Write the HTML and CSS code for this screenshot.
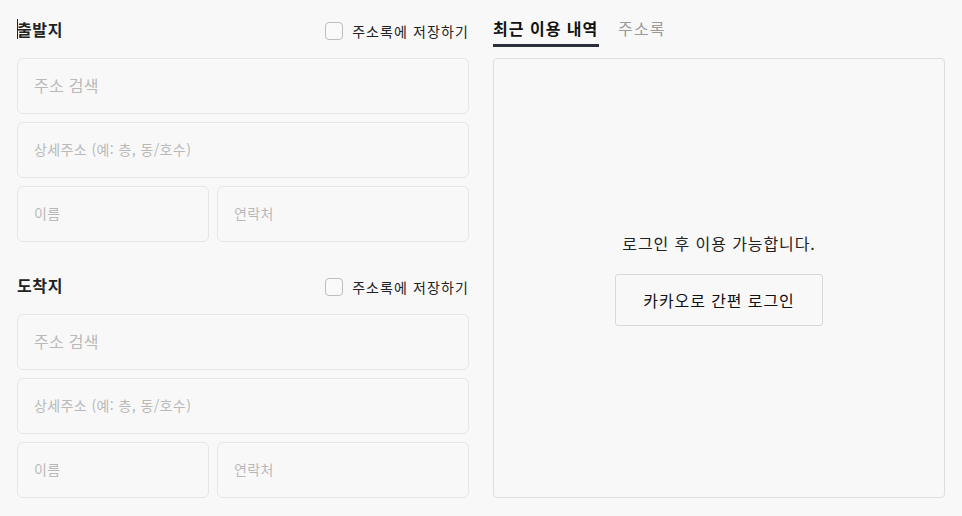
FILE: index.html
```html
<!DOCTYPE html>
<html lang="ko">
<head>
<meta charset="utf-8">
<link rel="stylesheet" href="styles.css">
</head>
<body>
<div class="page">
  <div class="left">
    <section class="block">
      <div class="block-head">
        <h2 class="title"><span class="caret"></span>출발지</h2>
        <label class="save"><span class="box"></span>주소록에 저장하기</label>
      </div>
      <div class="fields">
        <div class="field big">주소 검색</div>
        <div class="field">상세주소 (예: 층, 동/호수)</div>
        <div class="pair">
          <div class="field">이름</div>
          <div class="field">연락처</div>
        </div>
      </div>
    </section>
    <section class="block">
      <div class="block-head">
        <h2 class="title">도착지</h2>
        <label class="save"><span class="box"></span>주소록에 저장하기</label>
      </div>
      <div class="fields">
        <div class="field big">주소 검색</div>
        <div class="field">상세주소 (예: 층, 동/호수)</div>
        <div class="pair">
          <div class="field">이름</div>
          <div class="field">연락처</div>
        </div>
      </div>
    </section>
  </div>
  <div class="right">
    <div class="tabs">
      <div class="tab active">최근 이용 내역</div>
      <div class="tab">주소록</div>
    </div>
    <div class="panel">
      <p class="notice">로그인 후 이용 가능합니다.</p>
      <button class="login">카카오로 간편 로그인</button>
    </div>
  </div>
</div>
</body>
</html>
```
FILE: styles.css
```css
* { box-sizing: border-box; }
html, body { margin: 0; padding: 0; background: #f8f8f8; }
body {
  font-family: "Noto Sans CJK KR", "Noto Sans", sans-serif;
  color: #222;
  width: 962px;
  height: 516px;
  overflow: hidden;
}
.page {
  display: flex;
  gap: 24px;
  padding: 18px 17px 0 17px;
}
.left {
  width: 452px;
  display: flex;
  flex-direction: column;
  gap: 32px;
}
.block-head {
  height: 26px;
  display: flex;
  align-items: center;
  justify-content: space-between;
  margin-bottom: 14px;
}
.title {
  margin: 0 0 4px 0;
  font-size: 16px;
  letter-spacing: 0.6px;
  font-weight: 700;
  color: #222;
  display: flex;
  align-items: center;
  line-height: 1;
}
.caret {
  display: inline-block;
  width: 1px;
  height: 20px;
  background: #222;
  margin-right: -1px;
}
.save {
  display: flex;
  align-items: center;
  gap: 9px;
  font-size: 14px;
  letter-spacing: 1.1px;
  color: #222;
}
.box {
  width: 18px;
  height: 18px;
  border: 1px solid #bdbdbd;
  border-radius: 4px;
  background: #fafafa;
}
.fields {
  display: flex;
  flex-direction: column;
  gap: 8px;
}
.field {
  height: 56px;
  border: 1px solid #e6e6e6;
  border-radius: 6px;
  background: #f8f8f8;
  display: flex;
  align-items: center;
  padding-left: 16px;
  padding-bottom: 2px;
  font-size: 14px;
  letter-spacing: 0.4px;
  color: #b9b9b9;
}
.field.big { font-size: 16px; letter-spacing: 0.3px; padding-bottom: 3px; }
.pair {
  display: grid;
  grid-template-columns: 192px 1fr;
  gap: 8px;
}
.right {
  width: 452px;
  display: flex;
  flex-direction: column;
}
.tabs {
  display: flex;
  gap: 19px;
  height: 40px;
}
.tab {
  font-size: 16px;
  letter-spacing: 1.2px;
  color: #999;
  height: 29px;
  line-height: 20px;
}
.tab.active {
  font-weight: 700;
  color: #111;
  letter-spacing: 1px;
  border-bottom: 3px solid #2b2f3a;
  width: 106px;
}
.panel {
  height: 440px;
  border: 1px solid #dedede;
  border-radius: 4px;
  display: flex;
  flex-direction: column;
  align-items: center;
  justify-content: center;
  padding-top: 1px;
}
.notice {
  margin: 0 0 20px 0;
  font-size: 16px;
  letter-spacing: 0.9px;
  line-height: 22px;
  color: #222;
}
.login {
  width: 208px;
  height: 52px;
  border: 1px solid #d8d8d8;
  border-radius: 3px;
  background: #f8f8f8;
  font-family: inherit;
  font-size: 16px;
  letter-spacing: 0.9px;
  color: #111;
}
```
